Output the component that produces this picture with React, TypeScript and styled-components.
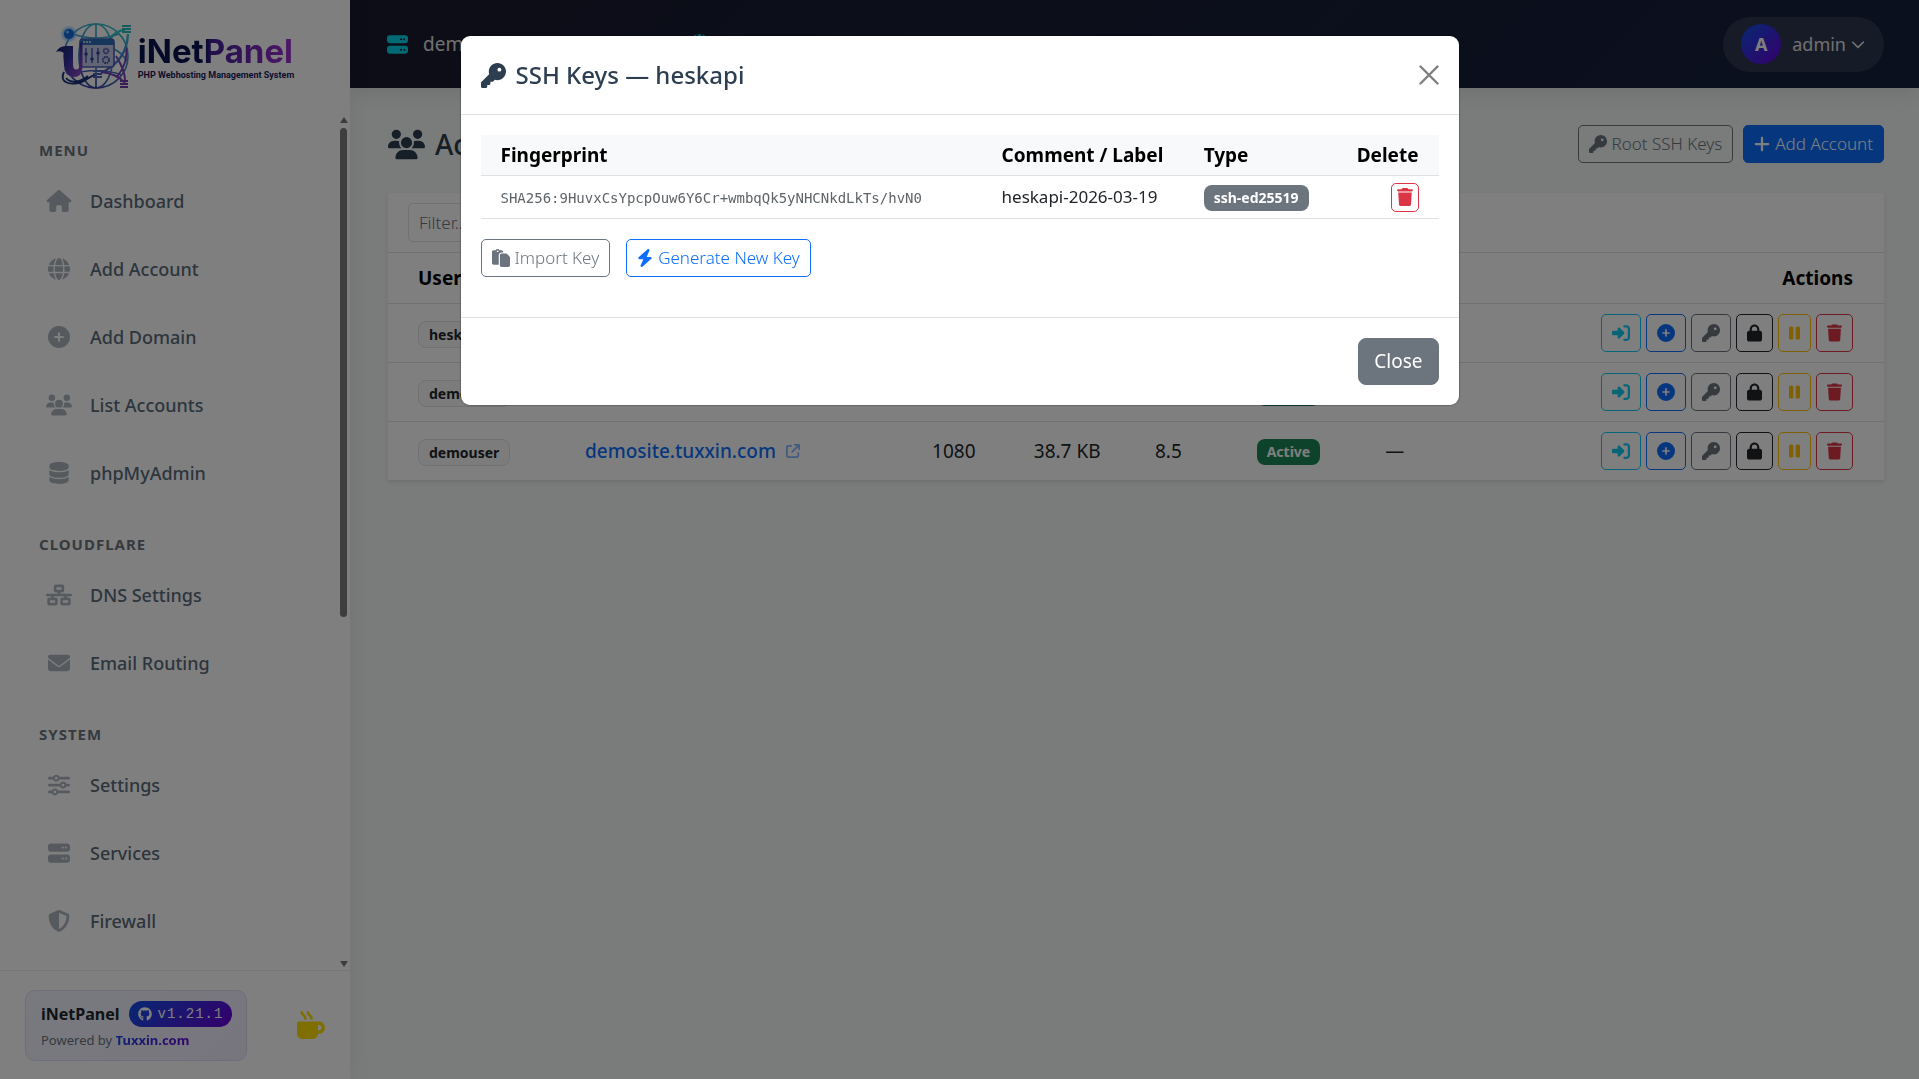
import React from "react";
import styled, { createGlobalStyle, css } from "styled-components";
import {
  FaArrowUpRightFromSquare,
  FaBolt,
  FaChevronDown,
  FaCirclePlus,
  FaDatabase,
  FaEnvelope,
  FaGithub,
  FaGlobe,
  FaHouse,
  FaKey,
  FaLock,
  FaMugHot,
  FaNetworkWired,
  FaPaste,
  FaPause,
  FaPlus,
  FaRightToBracket,
  FaServer,
  FaShieldHalved,
  FaSliders,
  FaTrash,
  FaUsers,
} from "react-icons/fa6";

const sans = `"Noto Sans", "Open Sans", sans-serif`;
const ink = "#2c3e50";
const line = "#dee2e6";
const brand = "linear-gradient(135deg, #0d50e6, #6a00d8)";

const GlobalStyle = createGlobalStyle`
  *, *::before, *::after { box-sizing: border-box; }
  body {
    margin: 0;
    font-family: ${sans};
    font-size: 18px;
    line-height: 28px;
    color: #212529;
    background: #f4f7f6;
  }
  button, input { font: inherit; }
  a { text-decoration: none; }
  svg { display: block; flex: none; }
`;

const Shell = styled.div`
  display: flex;
  height: 100vh;
  overflow: hidden;
`;

/* ---------- Sidebar ---------- */

const Sidebar = styled.aside`
  display: flex;
  flex: none;
  flex-direction: column;
  width: 350px;
  background: #fff;
  box-shadow: 4px 0 20px rgba(0, 0, 0, 0.05);
  z-index: 1;
`;

const Brand = styled.a`
  display: flex;
  align-items: center;
  justify-content: center;
  gap: 6px;
  height: 113px;
`;

const BrandText = styled.span`
  display: flex;
  flex-direction: column;
`;

const BrandName = styled.span`
  font: 700 33px/36px Inter, sans-serif;
  color: transparent;
  background: linear-gradient(90deg, #0b1250 0 43%, #41209a 47%, #a02fd0);
  background-clip: text;
`;

const BrandTag = styled.span`
  font: 700 9px/12px Roboto, sans-serif;
  color: #1b1a5c;
`;

const NavArea = styled.div`
  display: flex;
  flex: 1;
  min-height: 0;
`;

const Nav = styled.nav`
  flex: 1;
  overflow: hidden;
`;

const NavHeading = styled.h2`
  margin: 0;
  padding: 27px 39px 7px;
  font-size: 15px;
  line-height: 20px;
  font-weight: 700;
  letter-spacing: 1px;
  text-transform: uppercase;
  color: #6c757d;
`;

const NavList = styled.ul`
  margin: 0;
  padding: 0;
  list-style: none;
`;

const NavLink = styled.a`
  display: flex;
  align-items: center;
  gap: 16px;
  height: 68px;
  padding-left: 44px;
  font-weight: 500;
  color: #5a6a7a;
`;

const NavIcon = styled.span`
  display: flex;
  justify-content: center;
  width: 30px;
  color: #adb5bd;
  svg { width: 26px; height: 22px; }
`;

const ScrollTrack = styled.div`
  display: flex;
  flex-direction: column;
  align-items: center;
  gap: 5px;
  width: 13px;
  padding: 4px 0 3px;
`;

const ScrollArrow = styled.span<{ $down?: boolean }>`
  border: 4px solid transparent;
  border-bottom: 6px solid #7a7a7a;
  border-top: 0;
  transform: ${(p) => (p.$down ? "rotate(180deg)" : "none")};
`;

const ScrollSpace = styled.div`
  flex: 1;
  align-self: stretch;
  padding: 0 3px;
`;

const ScrollThumb = styled.div`
  width: 7px;
  height: 59%;
  border-radius: 4px;
  background: #7c7c7c;
`;

const SideFooter = styled.footer`
  display: flex;
  align-items: center;
  justify-content: space-between;
  height: 109px;
  padding: 0 25px;
  border-top: 1px solid #e9ecef;
`;

const VersionCard = styled.div`
  width: 222px;
  padding: 10px 15px;
  border: 1px solid #dcdcf5;
  border-radius: 10px;
  background: linear-gradient(135deg, #f0f4ff, #f0ebfb);
`;

const VersionRow = styled.div`
  display: flex;
  align-items: center;
  gap: 9px;
  font-size: 16px;
  line-height: 26px;
  font-weight: 700;
`;

const VersionPill = styled.a`
  display: flex;
  align-items: center;
  gap: 6px;
  height: 26px;
  padding: 0 9px;
  border-radius: 13px;
  background: ${brand};
  color: #fff;
  font: 400 14px/24px "Liberation Mono", monospace;
  letter-spacing: 1px;
`;

const Powered = styled.div`
  padding-top: 3px;
  font-size: 13px;
  line-height: 20px;
  color: #6c757d;
`;

const BrandLink = styled.a`
  font-weight: 700;
  color: transparent;
  background: ${brand};
  background-clip: text;
`;

const Coffee = styled.a`
  color: #ffdd00;
`;

/* ---------- Main column ---------- */

const Main = styled.div`
  display: flex;
  flex: 1;
  flex-direction: column;
  min-width: 0;
`;

const Topbar = styled.header`
  display: flex;
  align-items: center;
  justify-content: space-between;
  height: 88px;
  padding: 0 35px 0 37px;
  background: linear-gradient(135deg, #1a1a2e, #16213e);
  box-shadow: 0 4px 20px rgba(0, 0, 0, 0.1);
  color: #e0e0e0;
  font-size: 19px;
`;

const HostInfo = styled.div`
  display: flex;
  align-items: center;
  gap: 40px;
`;

const HostItem = styled.span`
  display: flex;
  align-items: center;
  gap: 15px;
  width: 262px;
  svg { color: #00d4e8; }
`;

const UserMenu = styled.button`
  display: flex;
  align-items: center;
  gap: 11px;
  height: 55px;
  padding: 0 19px 0 18px;
  border: 0;
  border-radius: 28px;
  background: rgba(255, 255, 255, 0.1);
  color: inherit;
`;

const Avatar = styled.span`
  width: 40px;
  border-radius: 50%;
  background: ${brand};
  color: #fff;
  font-size: 18px;
  line-height: 40px;
  font-weight: 700;
`;

const UserName = styled.span`
  display: flex;
  align-items: center;
  gap: 5px;
  font-size: 18px;
`;

const Content = styled.main`
  padding: 37px 35px 0 38px;
`;

const PageHead = styled.div`
  display: flex;
  align-items: center;
  justify-content: space-between;
  margin-bottom: 30px;
`;

const PageTitle = styled.h1`
  display: flex;
  align-items: center;
  gap: 10px;
  margin: 0;
  font-size: 28px;
  line-height: 38px;
  font-weight: 500;
  color: ${ink};
`;

const ButtonRow = styled.div<{ $gap: number }>`
  display: flex;
  gap: ${(p) => p.$gap}px;
`;

type Tone = "info" | "primary" | "secondary" | "dark" | "warning" | "danger";

const tones: Record<Tone, string> = {
  info: "#0dcaf0",
  primary: "#0d6efd",
  secondary: "#6c757d",
  dark: "#212529",
  warning: "#ffc107",
  danger: "#dc3545",
};

const Button = styled.button<{ $tone: Tone; $solid?: boolean; $icon?: number }>`
  display: flex;
  align-items: center;
  gap: 5px;
  height: 38px;
  padding: 0 10px;
  border: 1px solid ${(p) => tones[p.$tone]};
  border-radius: 5px;
  background: ${(p) => (p.$solid ? tones[p.$tone] : "transparent")};
  color: ${(p) => (p.$solid ? "#fff" : tones[p.$tone])};
  font-size: 17px;
  font-weight: 300;
  line-height: 26px;
  white-space: nowrap;
  svg { width: ${(p) => p.$icon ?? 18}px; height: 18px; }
`;

const SmallIconButton = styled(Button)`
  height: 29px;
  padding: 0 5px;
`;

const CloseButton = styled(Button)`
  height: 47px;
  padding: 0 15px;
  border-radius: 8px;
  font-size: 19px;
  font-weight: 400;
`;

const Card = styled.section`
  background: #fff;
  box-shadow: 0 2px 5px rgba(0, 0, 0, 0.08);
`;

const CardHead = styled.div`
  padding: 10px 20px;
  border-bottom: 1px solid ${line};
`;

const Filter = styled.input`
  display: block;
  width: 300px;
  height: 39px;
  padding: 0 10px;
  border: 1px solid ${line};
  border-radius: 5px;
  background: #fff;
  font-size: 17px;
  font-weight: 300;
  &::placeholder { color: #6c757d; opacity: 1; }
`;

const AccountsTable = styled.table`
  width: 100%;
  border-collapse: collapse;
  table-layout: fixed;
  text-align: left;
  font-size: 19px;
  th, td {
    padding: 1px 10px 0;
    border-bottom: 1px solid ${line};
  }
  th { height: 50px; font-weight: 700; color: #000; }
  td { height: 59px; }
  th:first-child, td:first-child { padding-left: 30px; }
  th:last-child, td:last-child { padding-right: 31px; text-align: right; }
`;

const badge = css`
  display: inline-block;
  padding: 0 10px;
  border-radius: 8px;
  font-size: 14px;
  line-height: 26px;
  font-weight: 700;
  vertical-align: middle;
`;

const UserBadge = styled.span`
  ${badge}
  border: 1px solid ${line};
  background: #f8f9fa;
  color: #212529;
  line-height: 25px;
`;

const Badge = styled.span<{ $color: string }>`
  ${badge}
  background: ${(p) => p.$color};
  color: #fff;
`;

const SiteLink = styled.a`
  display: flex;
  align-items: center;
  gap: 10px;
  font-weight: 500;
  color: #0d6efd;
  svg { opacity: 0.5; }
`;

const Actions = styled.div`
  display: flex;
  justify-content: flex-end;
  gap: 5px;
`;

/* ---------- Dialog ---------- */

const Backdrop = styled.div`
  position: fixed;
  inset: 0;
  z-index: 10;
  display: flex;
  align-items: flex-start;
  justify-content: center;
  padding: 36px 20px;
  background: rgba(0, 0, 0, 0.5);
`;

const Dialog = styled.div`
  width: 100%;
  max-width: 998px;
  border-radius: 9px;
  background: #fff;
  box-shadow: 0 0 1px 1px rgba(0, 0, 0, 0.2);
`;

const DialogHead = styled.div`
  display: flex;
  align-items: center;
  justify-content: space-between;
  height: 79px;
  padding: 0 20px;
  border-bottom: 1px solid ${line};
`;

const DialogTitle = styled.h2`
  display: flex;
  align-items: center;
  gap: 10px;
  margin: 0;
  font-size: 24px;
  line-height: 38px;
  font-weight: 500;
  color: ${ink};
`;

const Dismiss = styled.button`
  padding: 0;
  border: 0;
  background: none;
  color: #7f7f7f;
`;

const DialogBody = styled.div`
  padding: 20px 20px 40px;
`;

const KeysTable = styled.table`
  width: 100%;
  margin-bottom: 20px;
  border-collapse: collapse;
  text-align: left;
  th, td {
    padding: 0 20px;
    border-bottom: 1px solid ${line};
  }
  thead { background: #f8f9fa; color: #000; }
  th { height: 40px; font-size: 19px; font-weight: 700; }
  td {
    height: 43px;
    padding-top: 7px;
    font-size: 17px;
    vertical-align: top;
  }
  th:last-child, td:last-child { text-align: right; }
  button { margin-left: auto; }
`;

const Fingerprint = styled.code`
  font: 400 14px/20px "DejaVu Sans Mono", monospace;
  color: #5f6468;
`;

const DialogFoot = styled.div`
  display: flex;
  justify-content: flex-end;
  padding: 20px;
  border-top: 1px solid ${line};
`;

/* ---------- Drawings ---------- */

function LogoMark() {
  return (
    <svg width="76" height="70" viewBox="0 0 76 70" fill="none" aria-hidden="true">
      <defs>
        <linearGradient id="globe" x1="0.7" y1="0" x2="0.35" y2="1">
          <stop offset="0" stopColor="#35c0c8" />
          <stop offset="0.5" stopColor="#4a86cc" />
          <stop offset="1" stopColor="#34409c" />
        </linearGradient>
        <linearGradient id="cable" x1="0" y1="0" x2="0" y2="1">
          <stop offset="0" stopColor="#2fd0cc" />
          <stop offset="0.55" stopColor="#3f88cc" />
          <stop offset="1" stopColor="#5a50b8" />
        </linearGradient>
        <linearGradient id="stem" x1="0" y1="0" x2="1" y2="1">
          <stop offset="0" stopColor="#0b2560" />
          <stop offset="0.5" stopColor="#33309c" />
          <stop offset="1" stopColor="#a04ad0" />
        </linearGradient>
        <radialGradient id="glow">
          <stop offset="0.4" stopColor="#3fa8ff" />
          <stop offset="1" stopColor="#7fc8ff" stopOpacity="0" />
        </radialGradient>
      </defs>
      <g stroke="url(#globe)" strokeWidth="1.7">
        <circle cx="40" cy="34" r="32" />
        <ellipse cx="40" cy="34" rx="17" ry="32" />
        <path d="M40 2v14M40 46v20M17 12q23 8 46 0M14 53q26-9 52 0M58 27q8 4 13 12" />
      </g>
      <path
        d="M61 55C68 46 72 36 70 24M45 50c10 1 18 4 24 11M60 34c5 8 9 16 9 24"
        stroke="#7a3cb4"
        strokeWidth="1.9"
      />
      <path d="M45 51C63 42 71 30 72 12M53 18c5-7 10-10 16-10" stroke="url(#cable)" strokeWidth="2.4" />
      <rect x="24" y="17" width="34" height="28" rx="3" fill="#c0c8ea" stroke="#4a5cb4" strokeWidth="1.6" />
      <path d="M24 20a3 3 0 0 1 3-3h28a3 3 0 0 1 3 3v3H24z" fill="#2f6cb8" />
      <g fill="#e4f2ff">
        <circle cx="28" cy="20" r="0.9" />
        <circle cx="31" cy="20" r="0.9" />
        <circle cx="34" cy="20" r="0.9" />
      </g>
      <g stroke="#2f4696" strokeWidth="1.2">
        <path d="M30 26v15M36 26v15M42 26v15" />
        <circle cx="50" cy="29" r="2.4" strokeWidth="1.7" strokeDasharray="1.3 0.6" />
        <circle cx="50" cy="38" r="3" strokeWidth="1.9" strokeDasharray="1.5 0.85" />
      </g>
      <g fill="#2f4696">
        <circle cx="30" cy="32" r="1.8" />
        <circle cx="36" cy="37" r="1.8" />
        <circle cx="42" cy="31" r="1.8" />
      </g>
      <circle cx="13" cy="12" r="9" fill="url(#glow)" />
      <circle cx="13" cy="12" r="5" fill="#1668d8" />
      <circle cx="11.5" cy="10" r="1.6" fill="#5cc6ff" />
      <path
        d="M0 30Q3 24 10 24H17V42Q17 48 20.500 47.500Q24 47 24 41V21L26.500 19V42Q27 55 18 55Q8 54 8 43V31Q4 28 0 30Z"
        fill="url(#stem)"
      />
      <path d="M8 50c-5 10 5 13 14 11 8-1 11-7 17-8M10 56c5 6 15 4 22-2" stroke="#1c2f7c" strokeWidth="1.9" />
      <g strokeWidth="2">
        <path d="M66 4h9M66 7h9M66 10h9" stroke="#2bb8bd" />
        <path d="M37 49h9M37 52h9M37 55h9" stroke="#4f62bc" />
        <path d="M64 59h8M64 62h8M64 65h8" stroke="#7038a8" />
      </g>
    </svg>
  );
}

function CrossIcon() {
  return (
    <svg width="20" height="20" viewBox="0 0 20 20" stroke="currentColor" strokeWidth="2.4" strokeLinecap="round">
      <path d="M1.500 1.500l17 17M18.500 1.500l-17 17" />
    </svg>
  );
}

/* ---------- Data ---------- */

const sections = [
  {
    title: "Menu",
    items: [
      ["Dashboard", FaHouse],
      ["Add Account", FaGlobe],
      ["Add Domain", FaCirclePlus],
      ["List Accounts", FaUsers],
      ["phpMyAdmin", FaDatabase],
    ],
  },
  {
    title: "Cloudflare",
    items: [
      ["DNS Settings", FaNetworkWired],
      ["Email Routing", FaEnvelope],
    ],
  },
  {
    title: "System",
    items: [
      ["Settings", FaSliders],
      ["Services", FaServer],
      ["Firewall", FaShieldHalved],
    ],
  },
] as const;

const accounts = [
  { user: "heskapi", domain: "heskapi.tuxxin.com", port: "1082", disk: "12.4 MB" },
  { user: "demouser", domain: "demo.tuxxin.com", port: "1081", disk: "40.1 KB" },
  { user: "demouser", domain: "demosite.tuxxin.com", port: "1080", disk: "38.7 KB" },
];

const actions = [
  { label: "Log in", tone: "info", icon: 18, Icon: FaRightToBracket },
  { label: "Add domain", tone: "primary", icon: 18, Icon: FaCirclePlus },
  { label: "SSH keys", tone: "secondary", icon: 18, Icon: FaKey },
  { label: "Change password", tone: "dark", icon: 15, Icon: FaLock },
  { label: "Suspend", tone: "warning", icon: 11, Icon: FaPause },
  { label: "Delete", tone: "danger", icon: 15, Icon: FaTrash },
] as const;

const columnWidths = ["12.5%", "23.2%", "6.8%", "8.1%", "6.8%", "8.6%", "10%", "24%"];

export default function App() {
  return (
    <>
      <GlobalStyle />
      <Shell>
        <Sidebar>
          <Brand href="#">
            <LogoMark />
            <BrandText>
              <BrandName>iNetPanel</BrandName>
              <BrandTag>PHP Webhosting Management System</BrandTag>
            </BrandText>
          </Brand>
          <NavArea>
            <Nav>
              {sections.map((section) => (
                <React.Fragment key={section.title}>
                  <NavHeading>{section.title}</NavHeading>
                  <NavList>
                    {section.items.map(([label, Icon]) => (
                      <li key={label}>
                        <NavLink href="#">
                          <NavIcon>
                            <Icon />
                          </NavIcon>
                          {label}
                        </NavLink>
                      </li>
                    ))}
                  </NavList>
                </React.Fragment>
              ))}
            </Nav>
            <ScrollTrack>
              <ScrollArrow />
              <ScrollSpace>
                <ScrollThumb />
              </ScrollSpace>
              <ScrollArrow $down />
            </ScrollTrack>
          </NavArea>
          <SideFooter>
            <VersionCard>
              <VersionRow>
                iNetPanel
                <VersionPill href="#">
                  <FaGithub size={14} />
                  v1.21.1
                </VersionPill>
              </VersionRow>
              <Powered>
                Powered by <BrandLink href="#">Tuxxin.com</BrandLink>
              </Powered>
            </VersionCard>
            <Coffee href="#" aria-label="Buy a coffee">
              <FaMugHot size={28} />
            </Coffee>
          </SideFooter>
        </Sidebar>

        <Main>
          <Topbar>
            <HostInfo>
              <HostItem>
                <FaServer size={21} />
                demo.tuxxin.com
              </HostItem>
              <HostItem>
                <FaGlobe size={21} />
                10.0.0.12
              </HostItem>
            </HostInfo>
            <UserMenu>
              <Avatar>A</Avatar>
              <UserName>
                admin
                <FaChevronDown size={14} />
              </UserName>
            </UserMenu>
          </Topbar>
          <Content>
            <PageHead>
              <PageTitle>
                <FaUsers size={37} />
                Accounts
              </PageTitle>
              <ButtonRow $gap={10}>
                <Button $tone="secondary">
                  <FaKey />
                  Root SSH Keys
                </Button>
                <Button $tone="primary" $solid $icon={16}>
                  <FaPlus />
                  Add Account
                </Button>
              </ButtonRow>
            </PageHead>
            <Card>
              <CardHead>
                <Filter type="search" placeholder="Filter..." aria-label="Filter accounts" />
              </CardHead>
              <AccountsTable>
                <colgroup>
                  {columnWidths.map((width, i) => (
                    <col key={i} style={{ width }} />
                  ))}
                </colgroup>
                <thead>
                  <tr>
                    <th>User</th>
                    <th>Domain</th>
                    <th>Port</th>
                    <th>Disk</th>
                    <th>PHP</th>
                    <th>Status</th>
                    <th>Backup</th>
                    <th>Actions</th>
                  </tr>
                </thead>
                <tbody>
                  {accounts.map((account) => (
                    <tr key={account.domain}>
                      <td>
                        <UserBadge>{account.user}</UserBadge>
                      </td>
                      <td>
                        <SiteLink href="#">
                          {account.domain}
                          <FaArrowUpRightFromSquare size={14} />
                        </SiteLink>
                      </td>
                      <td>{account.port}</td>
                      <td>{account.disk}</td>
                      <td>8.5</td>
                      <td>
                        <Badge $color="#198754">Active</Badge>
                      </td>
                      <td>—</td>
                      <td>
                        <Actions>
                          {actions.map(({ label, tone, icon, Icon }) => (
                            <Button key={label} $tone={tone} $icon={icon} aria-label={label}>
                              <Icon />
                            </Button>
                          ))}
                        </Actions>
                      </td>
                    </tr>
                  ))}
                </tbody>
              </AccountsTable>
            </Card>
          </Content>
        </Main>
      </Shell>

      <Backdrop>
        <Dialog role="dialog" aria-modal="true" aria-labelledby="keys-title">
          <DialogHead>
            <DialogTitle id="keys-title">
              <FaKey size={25} />
              SSH Keys — heskapi
            </DialogTitle>
            <Dismiss aria-label="Close dialog">
              <CrossIcon />
            </Dismiss>
          </DialogHead>
          <DialogBody>
            <KeysTable>
              <colgroup>
                <col style={{ width: "52.3%" }} />
                <col style={{ width: "21.1%" }} />
                <col />
                <col />
              </colgroup>
              <thead>
                <tr>
                  <th>Fingerprint</th>
                  <th>Comment / Label</th>
                  <th>Type</th>
                  <th>Delete</th>
                </tr>
              </thead>
              <tbody>
                <tr>
                  <td>
                    <Fingerprint>SHA256:9HuvxCsYpcpOuw6Y6Cr+wmbqQk5yNHCNkdLkTs/hvN0</Fingerprint>
                  </td>
                  <td>heskapi-2026-03-19</td>
                  <td>
                    <Badge $color="#6c757d">ssh-ed25519</Badge>
                  </td>
                  <td>
                    <SmallIconButton $tone="danger" $icon={16} aria-label="Delete key">
                      <FaTrash />
                    </SmallIconButton>
                  </td>
                </tr>
              </tbody>
            </KeysTable>
            <ButtonRow $gap={16}>
              <Button $tone="secondary">
                <FaPaste />
                Import Key
              </Button>
              <Button $tone="primary" $icon={16}>
                <FaBolt />
                Generate New Key
              </Button>
            </ButtonRow>
          </DialogBody>
          <DialogFoot>
            <CloseButton $tone="secondary" $solid>
              Close
            </CloseButton>
          </DialogFoot>
        </Dialog>
      </Backdrop>
    </>
  );
}
